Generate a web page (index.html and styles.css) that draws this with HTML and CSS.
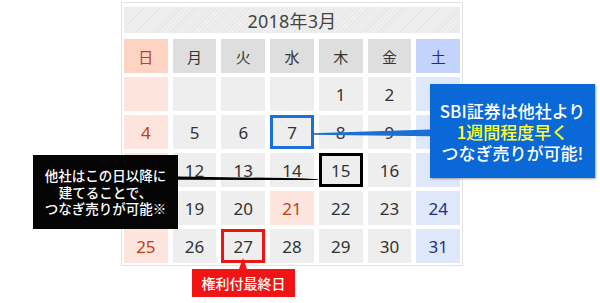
FILE: index.html
```html
<!DOCTYPE html>
<html lang="ja">
<head>
<meta charset="utf-8">
<title>2018年3月</title>
<link rel="stylesheet" href="styles.css">
</head>
<body>
<div class="stage">
  <div class="calendar">
    <div class="title">2018年3月</div>
    <div class="grid">
      <div class="dow sun">日</div>
      <div class="dow">月</div>
      <div class="dow">火</div>
      <div class="dow">水</div>
      <div class="dow">木</div>
      <div class="dow">金</div>
      <div class="dow sat">土</div>

      <div class="day sun"></div>
      <div class="day"></div>
      <div class="day"></div>
      <div class="day"></div>
      <div class="day">1</div>
      <div class="day">2</div>
      <div class="day sat"></div>

      <div class="day sun">4</div>
      <div class="day">5</div>
      <div class="day">6</div>
      <div class="day mark-blue">7</div>
      <div class="day">8</div>
      <div class="day">9</div>
      <div class="day sat"></div>

      <div class="day sun"></div>
      <div class="day">12</div>
      <div class="day">13</div>
      <div class="day">14</div>
      <div class="day mark-black">15</div>
      <div class="day">16</div>
      <div class="day sat"></div>

      <div class="day sun"></div>
      <div class="day">19</div>
      <div class="day">20</div>
      <div class="day sun">21</div>
      <div class="day">22</div>
      <div class="day">23</div>
      <div class="day sat">24</div>

      <div class="day sun">25</div>
      <div class="day">26</div>
      <div class="day mark-red">27</div>
      <div class="day">28</div>
      <div class="day">29</div>
      <div class="day">30</div>
      <div class="day sat">31</div>
    </div>
  </div>

  <svg class="connectors" width="600" height="303" viewBox="0 0 600 303">
    <polygon points="312,133.3 430,129.5 430,136.2 312,134.7" fill="#1a6fd8"/>
    <polygon points="178,176.5 300,178.3 318,179.2 318,180 300,180 178,179.8" fill="#000"/>
    <polygon points="243,258 247,269 239,269" fill="#f01414"/>
  </svg>

  <div class="note note-blue">
    <span>SBI証券は他社より</span>
    <span class="hl">1週間程度早く</span>
    <span>つなぎ売りが可能!</span>
  </div>

  <div class="note note-black">
    <span>他社はこの日以降に</span>
    <span>建てることで、</span>
    <span>つなぎ売りが可能※</span>
  </div>

  <div class="note note-red">権利付最終日</div>
</div>
</body>
</html>
```

FILE: styles.css
```css
* { box-sizing: border-box; }

html, body {
  margin: 0;
  padding: 0;
  background: #fff;
}

body {
  font-family: "Noto Sans", "Noto Sans CJK JP", sans-serif;
  color: #333;
}

.stage {
  position: relative;
  width: 600px;
  height: 303px;
  overflow: hidden;
  padding: 2px 0 0 121px;
}

.calendar {
  width: 342px;
  border: 1px solid #e2e2e2;
  padding: 4px 2px 2px 2px;
  background: #fff;
  display: flex;
  flex-direction: column;
  gap: 6px;
}

.title {
  height: 26px;
  display: flex;
  align-items: center;
  justify-content: center;
  font-size: 18px;
  color: #444;
  background: repeating-linear-gradient(135deg, #efefef 0 2px, #e7e7e7 2px 3px);
  letter-spacing: 0.2px;
}

.grid {
  display: grid;
  grid-template-columns: repeat(7, 1fr);
  grid-template-rows: 34px repeat(5, 34px);
  column-gap: 5px;
  row-gap: 4px;
}

.dow {
  background: #dedede;
  display: flex;
  align-items: center;
  justify-content: center;
  font-size: 15px;
  color: #333;
}

.dow.sun { background: #fdd3c4; color: #c23c18; }
.dow.sat { background: #c4d3fb; color: #1f2f85; }

.day {
  position: relative;
  background: #eeeeee;
  display: flex;
  align-items: center;
  justify-content: center;
  font-size: 17px;
  color: #333;
}

.day.sun { background: #fde5dd; color: #c23c18; }
.day.sat { background: #dfe7fb; color: #1f2f85; }

.mark-blue { box-shadow: inset 0 0 0 3px #1a6fd8; }
.mark-black { box-shadow: inset 0 0 0 3px #000; }
.mark-red { box-shadow: inset 0 0 0 3px #ee1414; }

.connectors {
  position: absolute;
  left: 0;
  top: 0;
  pointer-events: none;
}

.note {
  position: absolute;
  display: flex;
  flex-direction: column;
  align-items: center;
  justify-content: center;
  font-family: "Noto Sans CJK JP", sans-serif;
  font-weight: 500;
  color: #fff;
  text-align: center;
  white-space: nowrap;
}

.note-blue {
  left: 430px;
  top: 84px;
  width: 165px;
  height: 94px;
  background: #0a69d6;
  font-size: 17px;
  line-height: 21px;
  box-shadow: 1px 1px 2px rgba(0, 0, 0, 0.35);
}

.note-blue .hl { color: #ffff33; }

.note-black {
  left: 33px;
  top: 155px;
  width: 145px;
  height: 74px;
  background: #050505;
  font-size: 13.5px;
  line-height: 16.5px;
}

.note-red {
  left: 192px;
  top: 269px;
  width: 103px;
  height: 28px;
  background: #f01414;
  font-size: 14px;
}
```
